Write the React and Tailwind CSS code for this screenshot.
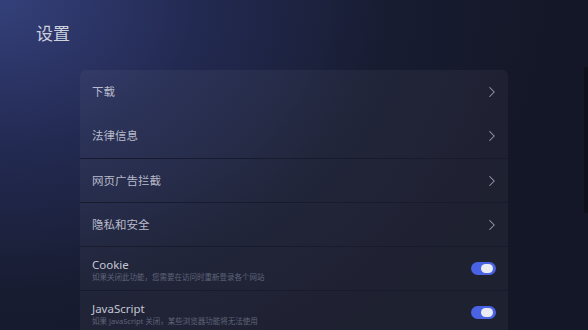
import { ChevronRight } from 'lucide-react';

const rows = [
  { title: '下载', type: 'link' },
  { title: '法律信息', type: 'link' },
  { title: '网页广告拦截', type: 'link', divider: true },
  { title: '隐私和安全', type: 'link', divider: true },
  { title: 'Cookie', sub: '如果关闭此功能，您需要在访问时重新登录各个网站', type: 'toggle', divider: true },
  { title: 'JavaScript', sub: '如果 JavaScript 关闭，某些浏览器功能将无法使用', type: 'toggle', divider: true },
];

const Toggle = () => (
  <div className="w-[25px] h-[13px] rounded-full bg-[#4a62e4] flex items-center justify-end pr-[3px]">
    <div className="w-[12px] h-[9px] rounded-full bg-[#e9eaf2]" />
  </div>
);

const Row = ({ row }) => (
  <div className={`h-[44px] flex items-center justify-between pl-3 pr-[12px] ${row.divider ? 'border-t border-[#171b2d]' : ''}`}>
    {row.sub ? (
      <div className="flex flex-col pt-[2px]">
        <span className="text-[11.5px] leading-[15px] text-[#c4c6d4]">{row.title}</span>
        <span className="text-[7.5px] leading-[11px] text-[#5f6479]">{row.sub}</span>
      </div>
    ) : (
      <span className="text-[11.5px] text-[#b9bccb]">{row.title}</span>
    )}
    {row.type === 'link' ? (
      <ChevronRight size={18} strokeWidth={1.4} className="text-[#9a9db1] -mr-[5px]" />
    ) : (
      <Toggle />
    )}
  </div>
);

export default function App() {
  return (
    <div
      className="relative w-[588px] h-[330px] overflow-hidden bg-[#141727] bg-[radial-gradient(ellipse_560px_420px_at_0%_0%,#34407a_0%,#232a52_35%,#181c31_70%,#141727_100%)]"
      style={{ fontFamily: '"Noto Sans", "Noto Sans CJK SC", sans-serif' }}
    >
      <div className="pl-9 pt-[22px] h-[70px]">
        <h1 className="text-[17px] leading-[24px] text-[#cfd1de]">设置</h1>
      </div>
      <div className="ml-20 w-[428px] rounded-t-[6px] bg-white/[0.045] overflow-hidden">
        {rows.map((row) => (
          <Row key={row.title} row={row} />
        ))}
      </div>
      <div className="absolute right-0 top-[67px] w-[4px] h-[146px] bg-[#0e101a]" />
    </div>
  );
}
